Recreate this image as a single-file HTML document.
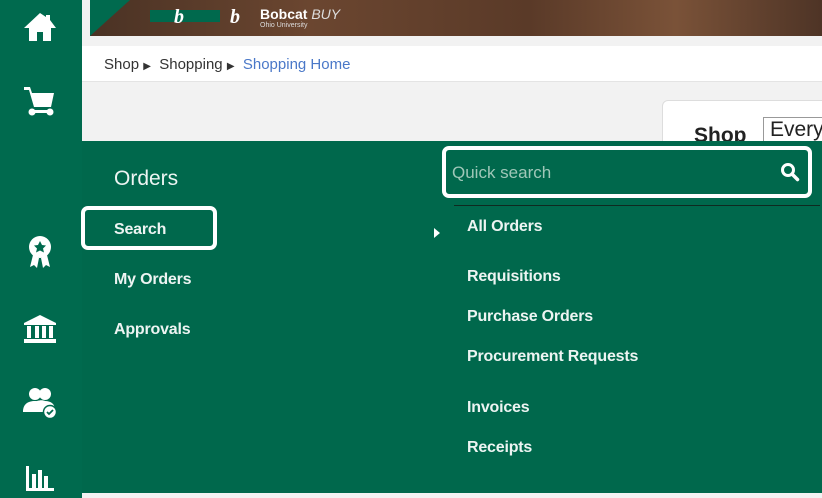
<!DOCTYPE html>
<html><head><style>
*{margin:0;padding:0;box-sizing:border-box}
body{width:822px;height:498px;overflow:hidden;background:#f2f2f2;font-family:"Liberation Sans",sans-serif;position:relative}
.abs{position:absolute}
.side{left:0;top:0;width:82px;height:498px;background:#006a4e}
.banner{left:90px;top:0;width:732px;height:36px;background:linear-gradient(90deg,#4a3224,#6b4630 30%,#5a3a28 60%,#7a5238 80%,#4e3426)}
.bc{left:82px;top:46px;width:740px;height:36px;background:#fff;border-bottom:1px solid #e4e4e4;font-size:15px;color:#333}
.panel{left:82px;top:141px;width:740px;height:352px;background:#00684c}
.w{color:#fff;font-size:16px;font-weight:bold;position:absolute;opacity:.93;letter-spacing:-0.2px}
</style></head><body>
<div class="abs side"></div>
<div class="abs banner">
 <div class="abs" style="left:0;top:0;width:0;height:0;border-top:36px solid #006a4e;border-right:40px solid transparent"></div>
 <div class="abs" style="left:60px;top:10px;width:70px;height:12px;background:#00694d"></div>
 <div class="abs" style="left:84px;top:6px;color:#fff;font:italic bold 20px 'Liberation Serif',serif">b</div>
 <div class="abs" style="left:140px;top:6px;color:#fff;font:italic bold 20px 'Liberation Serif',serif">b</div>
 <div class="abs" style="left:170px;top:6px;color:#fff;font:bold 14px 'Liberation Sans',sans-serif">Bobcat <i style="font-weight:normal;color:#ddd">BUY</i></div>
 <div class="abs" style="left:170px;top:22px;color:#ddd;font-size:7px">Ohio University</div>
</div>
<div class="abs bc"><span class="abs" style="left:22px;top:10px">Shop <span style="font-size:10px">▶</span>&nbsp; Shopping <span style="font-size:10px">▶</span>&nbsp; <span style="color:#4a78c8">Shopping Home</span></span></div>
<div class="abs" style="left:662px;top:100px;width:170px;height:60px;background:#fff;border:1px solid #ddd;border-radius:6px"></div>
<div class="abs" style="left:694px;top:124px;font-size:21px;font-weight:bold;color:#222">Shop</div>
<div class="abs" style="left:763px;top:117px;width:70px;height:30px;border:1px solid #999;background:#fff;font-size:21px;padding-left:6px;color:#222">Every</div>
<div class="abs panel"></div>
<svg class="abs" style="left:23px;top:12px" width="34" height="30" viewBox="0 0 34 30"><path d="M17 1L1 16h5v13h8v-9h6v9h8V16h5L27 8V3h-4v2z" fill="#fff"/></svg>
<svg class="abs" style="left:22px;top:84px" width="36" height="36" viewBox="0 0 36 36"><path d="M2 3h6l2 6h22l-3 14H12L7 6H2z" fill="#fff"/><rect x="8" y="26" width="22" height="3" fill="#fff"/><circle cx="10" cy="28" r="3.5" fill="#fff"/><circle cx="28" cy="28" r="3.5" fill="#fff"/></svg>
<svg class="abs" style="left:26px;top:235px" width="28" height="34" viewBox="0 0 28 34"><circle cx="14" cy="12" r="11" fill="#fff"/><path d="M14 6l2 4 4 .5-3 3 1 4-4-2-4 2 1-4-3-3 4-.5z" fill="#006a4e"/><path d="M7 20l-3 12 4-2 3 3 2-10zM21 20l3 12-4-2-3 3-2-10z" fill="#fff"/></svg>
<svg class="abs" style="left:23px;top:314px" width="34" height="30" viewBox="0 0 34 30"><path d="M17 1L1 9v2h32V9z" fill="#fff"/><rect x="4" y="12" width="4" height="12" fill="#fff"/><rect x="12" y="12" width="4" height="12" fill="#fff"/><rect x="19" y="12" width="4" height="12" fill="#fff"/><rect x="26" y="12" width="4" height="12" fill="#fff"/><rect x="1" y="25" width="32" height="4" fill="#fff"/></svg>
<svg class="abs" style="left:23px;top:386px" width="34" height="34" viewBox="0 0 34 34"><circle cx="12" cy="8" r="6" fill="#fff"/><circle cx="22" cy="8" r="6" fill="#fff"/><path d="M0 26c0-8 5-11 12-11s12 3 12 11z M14 15c3-1 6-1 8 0 6 0 10 3 10 9H24z" fill="#fff"/><circle cx="27" cy="26" r="6.5" fill="#fff" stroke="#006a4e" stroke-width="1.5"/><path d="M24 26l2 2 4-4" stroke="#006a4e" stroke-width="1.8" fill="none"/></svg>
<svg class="abs" style="left:24px;top:462px" width="32" height="30" viewBox="0 0 32 30"><rect x="2" y="4" width="3" height="24" fill="#fff"/><rect x="8" y="12" width="4" height="14" fill="#fff"/><rect x="14" y="8" width="4" height="18" fill="#fff"/><rect x="20" y="14" width="4" height="12" fill="#fff"/><rect x="2" y="26" width="28" height="3" fill="#fff"/></svg>
<div class="abs" style="left:114px;top:167px;color:#fff;font-size:21px;opacity:.93">Orders</div>
<div class="abs" style="left:81px;top:206px;width:136px;height:44px;border:4px solid #fff;border-radius:7px"></div>
<div class="w" style="left:114px;top:221px">Search</div>
<div class="w" style="left:114px;top:271px">My Orders</div>
<div class="w" style="left:114px;top:321px">Approvals</div>
<div class="abs" style="left:434px;top:228px;width:0;height:0;border-left:6px solid #fff;border-top:5px solid transparent;border-bottom:5px solid transparent"></div>
<div class="abs" style="left:442px;top:146px;width:370px;height:52px;border:4px solid #fff;border-radius:7px"></div>
<div class="abs" style="left:452px;top:163px;font-size:17px;color:#9fc7b8">Quick search</div>
<svg class="abs" style="left:780px;top:162px" width="20" height="20" viewBox="0 0 20 20"><circle cx="8" cy="8" r="5.5" stroke="#fff" stroke-width="3" fill="none"/><path d="M12 12l5.5 5.5" stroke="#fff" stroke-width="3.5" stroke-linecap="round"/></svg>
<div class="abs" style="left:454px;top:205px;width:366px;height:1px;background:#0f2a20"></div>
<div class="w" style="left:467px;top:218px">All Orders</div>
<div class="w" style="left:467px;top:268px">Requisitions</div>
<div class="w" style="left:467px;top:308px">Purchase Orders</div>
<div class="w" style="left:467px;top:348px">Procurement Requests</div>
<div class="w" style="left:467px;top:399px">Invoices</div>
<div class="w" style="left:467px;top:439px">Receipts</div>
</body></html>
